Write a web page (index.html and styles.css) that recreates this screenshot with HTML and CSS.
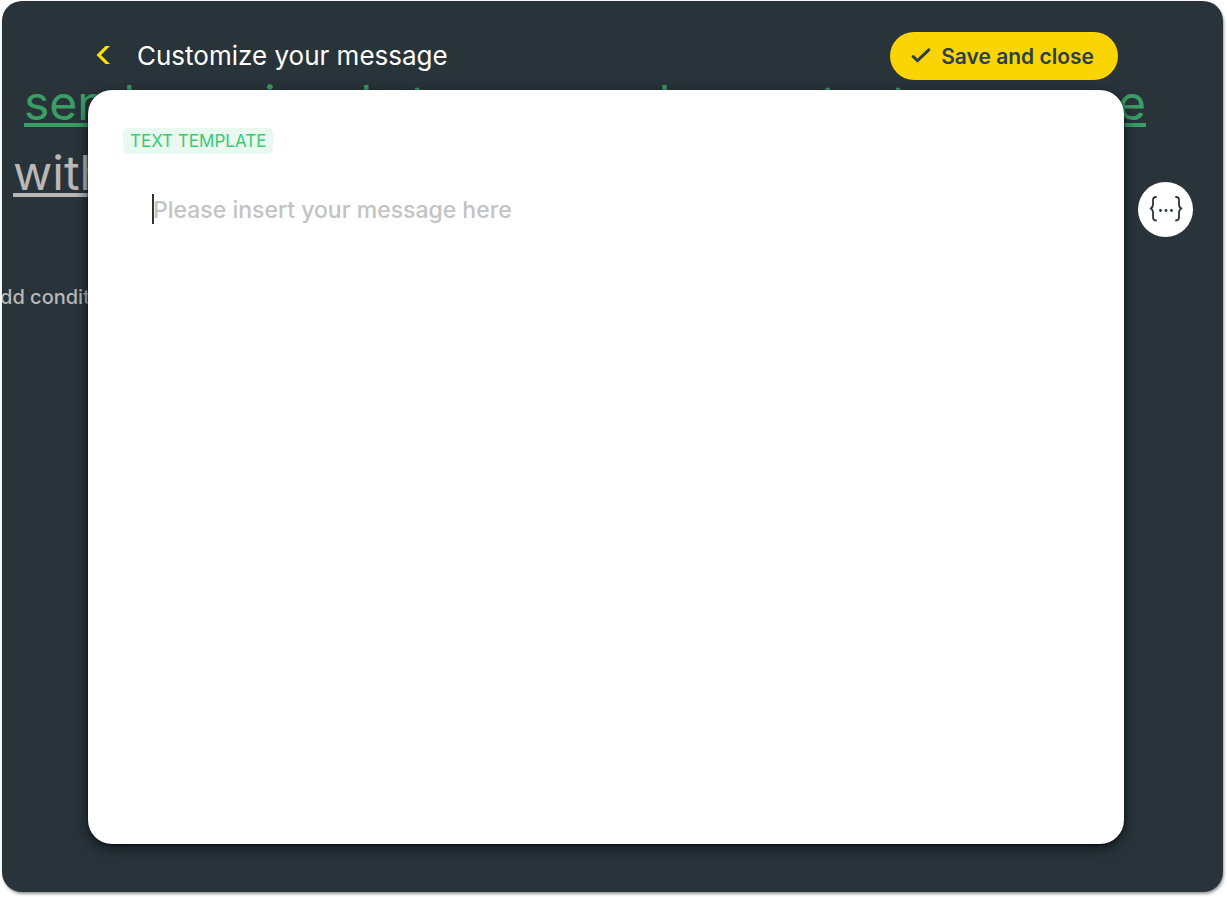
FILE: index.html
```html
<!DOCTYPE html>
<html lang="en">
<head>
<meta charset="utf-8">
<meta name="viewport" content="width=device-width, initial-scale=1">
<title>Customize your message</title>
<link rel="stylesheet" href="styles.css">
</head>
<body>
<main class="screen">
  <div class="backdrop" aria-hidden="true">
    <p class="rule rule-action">send a signal to our sale contact resource</p>
    <p class="rule rule-with">with this text</p>
    <p class="add-condition">Add condition</p>
  </div>
  <section class="dialog" aria-labelledby="title">
    <header class="header">
      <button class="back" type="button" aria-label="Back">
        <svg width="14" height="20" viewBox="0 0 14 20"><path d="M9.500 0H14L5 9l9 9H9.500L.5 9z" fill="#ffe000"/></svg>
      </button>
      <h1 class="title" id="title">Customize your message</h1>
      <button class="save" type="button">
        <svg width="20" height="16" viewBox="0 0 20 16"><path d="M2.200 8.500 6.500 12.700 17.800 1.800" fill="none" stroke="#2c3f4c" stroke-width="3" stroke-linecap="round" stroke-linejoin="round"/></svg>
        <span>Save and close</span>
      </button>
    </header>
    <div class="card">
      <label class="badge" for="message">TEXT TEMPLATE</label>
      <div class="editor">
        <span class="caret"></span>
        <textarea class="message" id="message" placeholder="Please insert your message here"></textarea>
      </div>
    </div>
    <button class="variables" type="button" aria-label="Insert variable">
      <svg width="34" height="28" viewBox="0 0 34 28" fill="none" stroke="#2a363d" stroke-width="1.800" stroke-linecap="round" stroke-linejoin="round"><path d="M7 1C4.500 1 4 2.500 4 4v4c0 2.500-.5 4-2.500 4.500C3.500 13 4 14.500 4 17v4C4 23 4.500 24.500 7 24.500M27 1c2.500 0 3 1.500 3 3v4c0 2.500.5 4 2.500 4.500C30.500 13 30 14.500 30 17v4c0 2-.5 3.500-3 3.500"/><g fill="#2a363d" stroke="none"><circle cx="11.500" cy="14.500" r="1.400"/><circle cx="17" cy="14.500" r="1.400"/><circle cx="22.500" cy="14.500" r="1.400"/></g></svg>
    </button>
  </section>
</main>
</body>
</html>
```
FILE: styles.css
```css
* { box-sizing: border-box; }

body {
  margin: 0;
  padding: 1px 4px 5px 2px;
  min-height: 100vh;
  display: flex;
  background: #fff;
  font-family: Inter, "Open Sans", sans-serif;
}

button {
  border: 0;
  padding: 0;
  background: none;
  font: inherit;
  cursor: pointer;
}

svg { display: block; }

.screen {
  position: relative;
  flex: 1;
  display: flex;
  overflow: hidden;
  border-radius: 20px;
  background: #29343a;
  box-shadow: 1px 2px 3px rgba(0, 0, 0, 0.4);
}

/* Rule sentence that shows dimmed behind the dialog */
.backdrop {
  position: absolute;
  inset: 67px 0 auto;
  white-space: nowrap;
}

.backdrop p { margin: 0; }

.rule {
  font-size: 48px;
  line-height: 70px;
  text-decoration: underline;
  text-decoration-thickness: 4px;
  text-decoration-skip-ink: none;
  text-underline-offset: 3px;
}

.backdrop .rule-action {
  margin: 0 77px 0 22px;
  color: #3a9e66;
  text-align-last: justify;
}

.rule-with {
  padding-left: 11px;
  color: #b9b7b7;
}

.add-condition {
  padding-top: 75px;
  text-indent: -16px;
  color: #b9b7b7;
  font-size: 20px;
  font-weight: 500;
  line-height: 28px;
}

.dialog {
  position: relative;
  flex: 1;
  display: grid;
  grid-template-columns: 1fr 55px;
  grid-template-rows: 48px 1fr;
  gap: 10px 14px;
  padding: 31px 30px 48px 86px;
}

.header {
  display: flex;
  align-items: center;
  padding: 0 6px 0 8px;
}

.title {
  flex: 1;
  margin: 0 0 0 27px;
  color: #fff;
  font-size: 26px;
  font-weight: 400;
  line-height: 36px;
}

.save {
  display: flex;
  align-items: center;
  gap: 10px;
  height: 48px;
  padding: 0 24px 0 21px;
  border-radius: 24px;
  background: #fad503;
  color: #2c3f4c;
  font-size: 21px;
  font-weight: 600;
}

.card {
  grid-row: 2;
  display: flex;
  flex-direction: column;
  align-items: flex-start;
  padding: 38px 35px 36px;
  border-radius: 24px;
  background: #fff;
  box-shadow: 0 4px 14px rgba(0, 10, 14, 0.7), 0 1px 2px #071418;
}

.badge {
  padding: 0 7px;
  border-radius: 5px;
  background: #e9f9f0;
  color: #35cd75;
  font-size: 17px;
  line-height: 26px;
}

.editor {
  position: relative;
  flex: 1;
  display: flex;
  align-self: stretch;
  margin-top: 40px;
  padding: 0 30px;
}

.caret {
  position: absolute;
  left: 29px;
  top: 0;
  width: 2px;
  height: 30px;
  background: #333;
}

.message {
  flex: 1;
  padding: 0;
  border: 0;
  outline: 0;
  resize: none;
  background: none;
  color: #29343a;
  font: 500 23px/32px Inter, "Open Sans", sans-serif;
}

.message::placeholder {
  color: #c3c3c3;
  opacity: 1;
}

.variables {
  grid-column: 2;
  grid-row: 2;
  display: grid;
  place-items: center;
  width: 55px;
  height: 55px;
  margin-top: 92px;
  border-radius: 50%;
  background: #fff;
}
```
